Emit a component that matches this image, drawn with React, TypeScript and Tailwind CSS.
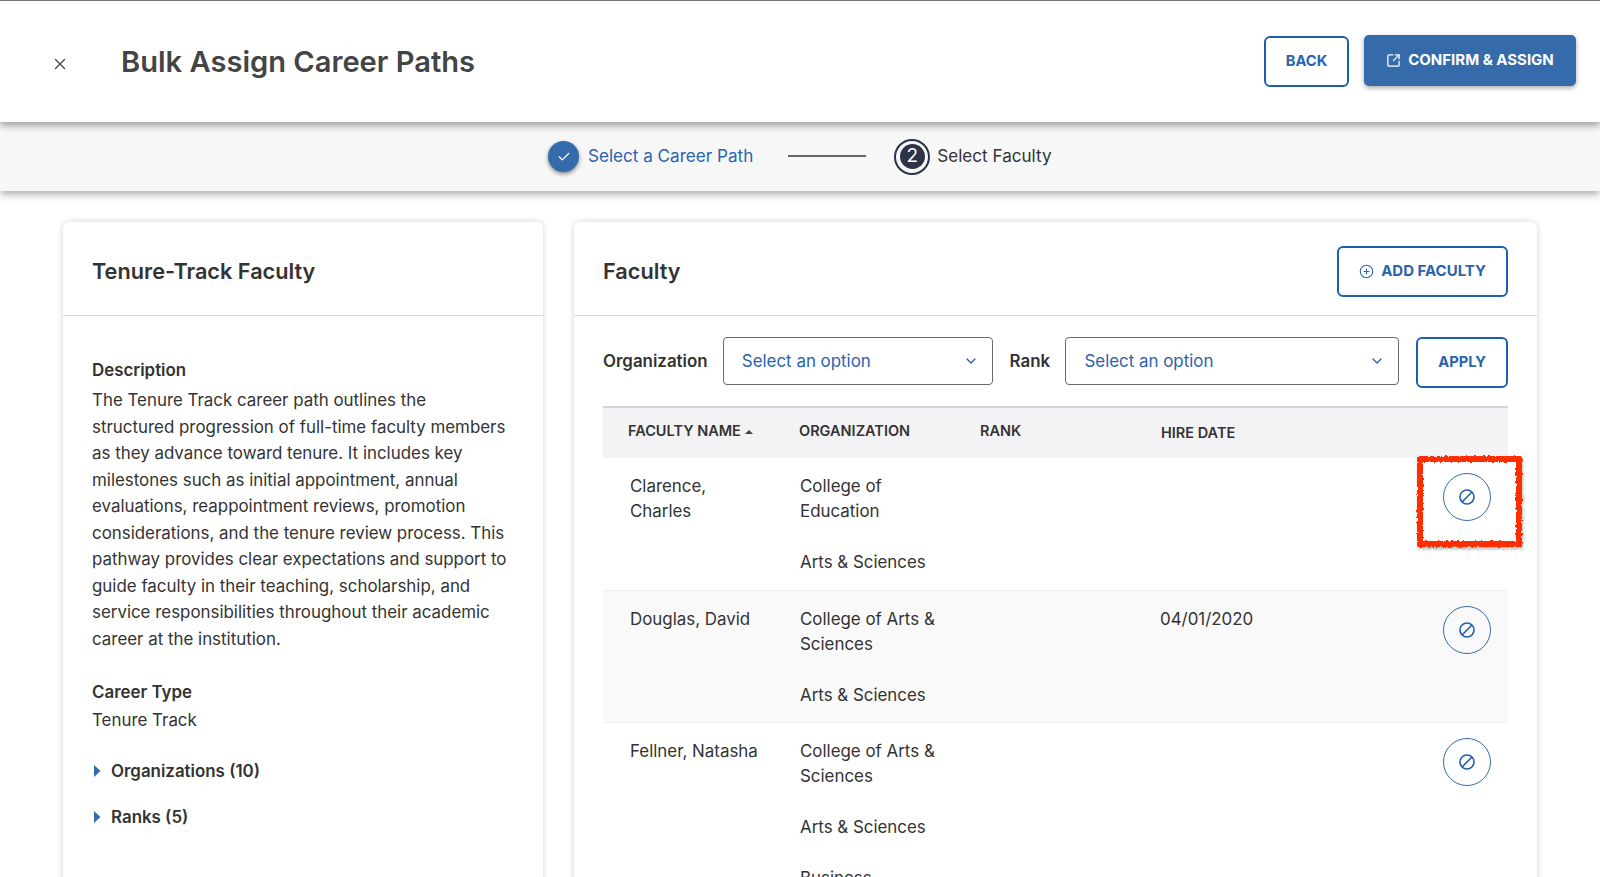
import { X, Check, SquareArrowOutUpRight, CirclePlus, ChevronDown } from "lucide-react";

const rows = [
  { name: "Clarence, Charles", org: "College of Education", extra: [] as string[], date: "", bg: "bg-white" },
  { name: "Douglas, David", org: "College of Arts & Sciences", extra: [] as string[], date: "04/01/2020", bg: "bg-[#f9f9f9]" },
  { name: "Fellner, Natasha", org: "College of Arts & Sciences", extra: ["Business"], date: "", bg: "bg-white" },
];

function SelectBox({ width }: { width: string }) {
  return (
    <div className={`${width} h-[48px] flex items-center justify-between pl-[18px] pr-[13px] border border-[#6b6b6b] rounded-[4px] text-[#2a63ad]`}>
      <span>Select an option</span>
      <ChevronDown size={16} strokeWidth={2} />
    </div>
  );
}

function Caret() {
  return (
    <svg width="7" height="12" viewBox="0 0 7 12" className="mr-[10px] ml-[2px]">
      <path d="M0 0 L6.5 6 L0 12 Z" fill="#356bab" />
    </svg>
  );
}

function BlockIcon() {
  return (
    <svg width="18" height="18" viewBox="0 0 18 18" fill="none" stroke="currentColor" strokeWidth="1.6">
      <circle cx="9" cy="9" r="7" />
      <path d="M4 14 L14 4" />
    </svg>
  );
}

export default function App() {
  return (
    <div className="relative w-[1600px] h-[877px] overflow-hidden bg-white text-[16.9px] leading-[26.5px] text-[#333]" style={{ fontFamily: "Inter, 'Liberation Sans', sans-serif" }}>
      <svg width="0" height="0" className="absolute">
        <filter id="rough">
          <feTurbulence type="fractalNoise" baseFrequency="0.35" numOctaves="2" seed="4" />
          <feDisplacementMap in="SourceGraphic" scale="3.5" />
        </filter>
      </svg>

      <header className="relative z-20 h-[122px] border-t border-[#777] bg-white flex items-center justify-between pl-[51px] pr-[24px] shadow-[0_3px_8px_rgba(0,0,0,0.4)]">
        <div className="flex items-center">
          <X size={18} strokeWidth={1.7} className="mt-[5px] text-[#444]" />
          <h1 className="ml-[52px] text-[29.1px] leading-[36px] font-semibold text-[#444]">Bulk Assign Career Paths</h1>
        </div>
        <div className="flex items-center gap-[15px] -mt-[2px]">
          <button className="w-[85px] h-[51px] mt-[1px] border-2 border-[#1d5fae] rounded-[6px] text-[14.7px] font-bold text-[#2a63ad]">BACK</button>
          <button className="w-[212px] h-[51px] -mt-[1px] rounded-[5px] bg-[#356bab] text-white text-[15px] font-bold flex items-center justify-center gap-[7px] shadow-[0_2px_5px_rgba(0,0,0,0.35)]">
            <SquareArrowOutUpRight size={15} strokeWidth={2} />
            CONFIRM &amp; ASSIGN
          </button>
        </div>
      </header>

      <div className="relative z-10 h-[69px] bg-[#f7f7f7] flex items-center pl-[548px] text-[17.1px] shadow-[0_3px_8px_rgba(0,0,0,0.35)]">
        <span className="w-[31px] h-[31px] rounded-full bg-[#356bab] flex items-center justify-center text-white shadow-[0_2px_4px_rgba(0,0,0,0.45)]">
          <Check size={14} strokeWidth={2.2} />
        </span>
        <span className="ml-[9px] text-[#2a63ad]">Select a Career Path</span>
        <span className="ml-[35px] w-[78px] h-[2px] bg-[#666] -mt-[1px]" />
        <span className="ml-[28px] w-[36px] h-[36px] rounded-full border-[2.5px] border-[#2a3347] flex items-center justify-center">
          <span className="w-[25px] h-[25px] rounded-full bg-[#2a3347] text-white flex items-center justify-center text-[19px]">2</span>
        </span>
        <span className="ml-[7px] text-[#333]">Select Faculty</span>
      </div>

      <main className="flex gap-[31px] pl-[63px] pt-[31px]">
        <section className="w-[480px] h-[680px] shrink-0 bg-white rounded-[6px] shadow-[0_0_6px_rgba(0,0,0,0.18)]">
          <div className="h-[94px] flex items-center px-[29px] pt-[6px] border-b border-[#d8d8d8]">
            <h2 className="text-[21.7px] font-semibold text-[#333]">Tenure-Track Faculty</h2>
          </div>
          <div className="pl-[29px] pr-[29px] pt-[38px]">
            <div className="font-semibold leading-[32px] mb-[1px]">Description</div>
            <p className="w-[419px]">The Tenure Track career path outlines the structured progression of full-time faculty members as they advance toward tenure. It includes key milestones such as initial appointment, annual evaluations, reappointment reviews, promotion considerations, and the tenure review process. This pathway provides clear expectations and support to guide faculty in their teaching, scholarship, and service responsibilities throughout their academic career at the institution.</p>
            <div className="font-semibold mt-[26px] leading-[28px]">Career Type</div>
            <div className="leading-[29px]">Tenure Track</div>
            <div className="mt-[23px] flex items-center font-semibold"><Caret />Organizations (10)</div>
            <div className="mt-[19px] flex items-center font-semibold"><Caret />Ranks (5)</div>
          </div>
        </section>

        <section className="w-[963px] h-[720px] shrink-0 bg-white rounded-[6px] shadow-[0_0_6px_rgba(0,0,0,0.18)]">
          <div className="h-[94px] flex items-center justify-between pl-[29px] pr-[29px] pt-[6px] border-b border-[#d8d8d8]">
            <h2 className="text-[21.7px] font-semibold text-[#333]">Faculty</h2>
            <button className="w-[171px] h-[51px] border-2 border-[#1d5fae] rounded-[6px] text-[15px] font-bold text-[#2a63ad] flex items-center justify-center gap-[7px]">
              <CirclePlus size={15} strokeWidth={1.7} />
              ADD FACULTY
            </button>
          </div>
          <div className="pl-[29px] pr-[29px]">
            <div className="pt-[21px] flex items-start">
              <span className="font-semibold h-[48px] flex items-center w-[120px]">Organization</span>
              <SelectBox width="w-[270px]" />
              <span className="font-semibold h-[48px] flex items-center ml-[17px] w-[56px]">Rank</span>
              <SelectBox width="w-[334px]" />
              <button className="ml-[17px] w-[92px] h-[51px] border-2 border-[#1d5fae] rounded-[6px] text-[14.7px] font-bold text-[#2a63ad]">APPLY</button>
            </div>
            <div className="mt-[18px] h-[52px] bg-[#f3f3f5] border-t-2 border-[#d4d4d4] grid grid-cols-[171px_181px_181px_1fr] items-center pl-[25px] text-[14.5px] font-semibold text-[#333]">
              <span className="flex items-center gap-[4px] -mt-[3px]">FACULTY NAME
                <svg width="8" height="4" viewBox="0 0 8 4"><path d="M0 4 L4 0 L8 4 Z" fill="#444" /></svg>
              </span>
              <span className="-mt-[3px]">ORGANIZATION</span>
              <span className="-mt-[3px]">RANK</span>
              <span>HIRE DATE</span>
            </div>
            {rows.map((r) => (
              <div key={r.name} className={`${r.bg} min-h-[132.6px] grid grid-cols-[170px_180px_180px_1fr_70px] pl-[27px] pt-[16px] border-b border-[#f0f0f0]`}>
                <div className="w-[132px] leading-[25px]">{r.name}</div>
                <div>
                  <div className="w-[150px] leading-[25px]">{r.org}</div>
                  <div className="mt-[25px] leading-[26px]">Arts &amp; Sciences</div>
                  {r.extra.map((e) => (
                    <div key={e} className="mt-[25px] leading-[26px]">{e}</div>
                  ))}
                </div>
                <div />
                <div className="-mt-[1px]">{r.date}</div>
                <div className="flex justify-center pr-[12px]">
                  <span className="w-[48px] h-[48px] -mt-[1px] rounded-full border border-[#356bab] flex items-center justify-center text-[#1d5fae]">
                    <BlockIcon />
                  </span>
                </div>
              </div>
            ))}
          </div>
        </section>
      </main>

      <div className="absolute left-[1417px] top-[456px] w-[105px] h-[91px] border-[6px] border-[#ff2d00] shadow-[1px_2px_3px_rgba(0,0,0,0.3)] [filter:url(#rough)]" />
    </div>
  );
}
